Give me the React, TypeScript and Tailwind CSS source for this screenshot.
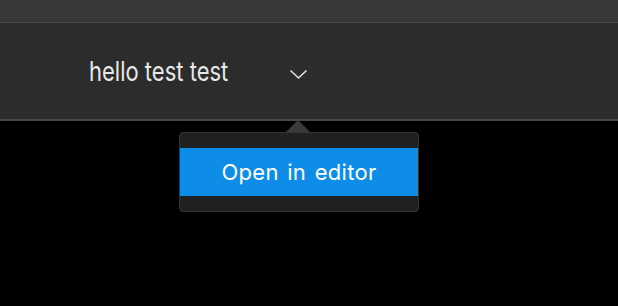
export default function App() {
    return (
        <div className="w-[618px] h-[306px] bg-black overflow-hidden" style={{ fontFamily: "Inter, 'Noto Sans', sans-serif" }}>
            {/* Top strip */}
            <div className="h-[23px] bg-[#383836] border-b border-[#4b4b4a]"></div>

            {/* Title bar */}
            <div className="h-[98px] bg-[#2c2c2c] border-b-2 border-[#474747] flex items-center pl-[89px] pt-[1px]">
                <div className="w-[139px] h-[34px] flex items-center">
                    <span className="origin-left scale-x-[0.8] whitespace-nowrap text-[27.5px] leading-none text-[#e8e8e8]">
                        hello test test
                    </span>
                </div>
                <svg className="ml-[61px] mt-[5px]" width="19" height="11" viewBox="0 0 19 11" fill="none">
                    <path d="M1.5 1.5 L9.5 9 L17.5 1.5" stroke="#e0e0e0" strokeWidth="1.6" />
                </svg>
            </div>

            {/* Popover */}
            <div className="relative ml-[179px] mt-[11px] w-[240px]">
                <div className="absolute -top-[12px] left-[107px] w-0 h-0 border-l-[12px] border-r-[12px] border-b-[12px] border-l-transparent border-r-transparent border-b-[#3a3a3a]"></div>
                <div className="bg-[#212121] border border-[#343434] rounded-[4px] py-[15px]">
                    <div className="h-[48px] bg-[#0d8de8] flex items-center justify-center text-[22px] tracking-[0.3px] [word-spacing:2px] text-white">
                        Open in editor
                    </div>
                </div>
            </div>
        </div>
    );
}
